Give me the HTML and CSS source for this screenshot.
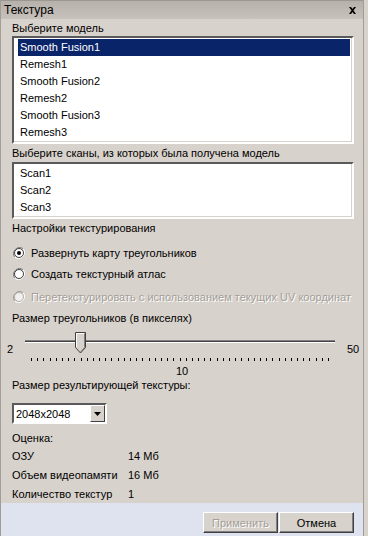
FILE: index.html
```
<!DOCTYPE html>
<html lang="ru">
<head>
    <meta charset="UTF-8">
    <title>Текстура</title>
    <link rel="stylesheet" href="styles.css">
</head>
<body>
    <div class="window">
        <div class="titlebar">
            <span>Текстура</span>
            <svg class="close" width="9" height="8" viewBox="0 0 9 8">
                <path d="M1 0h2l1.5 2 1.5-2h2l-2.5 3.5 2.5 3.5h-2l-1.5-2-1.5 2h-2l2.5-3.5z" fill="#000"/>
            </svg>
        </div>

        <div class="content">
            <div class="label first">Выберите модель</div>
            <div class="listbox models">
                <div class="item selected">Smooth Fusion1</div>
                <div class="item">Remesh1</div>
                <div class="item">Smooth Fusion2</div>
                <div class="item">Remesh2</div>
                <div class="item">Smooth Fusion3</div>
                <div class="item">Remesh3</div>
            </div>

            <div class="label">Выберите сканы, из которых была получена модель</div>
            <div class="listbox scans">
                <div class="item">Scan1</div>
                <div class="item">Scan2</div>
                <div class="item">Scan3</div>
            </div>

            <div class="label">Настройки текстурирования</div>
            <div class="radio r1">
                <svg width="12" height="12" viewBox="0 0 12 12">
                    <path d="M10.2 1.8A6 6 0 0 0 1.8 10.2" stroke="#808080" fill="none"/>
                    <path d="M1.8 10.2A6 6 0 0 0 10.2 1.8" stroke="#fff" fill="none"/>
                    <circle cx="6" cy="6" r="4.5" fill="#fff" stroke="#404040" stroke-width="1"/>
                    <circle cx="6" cy="6" r="2" fill="#000"/>
                </svg>
                <span>Развернуть карту треугольников</span>
            </div>
            <div class="radio r2">
                <svg width="12" height="12" viewBox="0 0 12 12">
                    <path d="M10.2 1.8A6 6 0 0 0 1.8 10.2" stroke="#808080" fill="none"/>
                    <path d="M1.8 10.2A6 6 0 0 0 10.2 1.8" stroke="#fff" fill="none"/>
                    <circle cx="6" cy="6" r="4.5" fill="#fff" stroke="#404040" stroke-width="1"/>
                </svg>
                <span>Создать текстурный атлас</span>
            </div>
            <div class="radio r3 disabled">
                <svg width="12" height="12" viewBox="0 0 12 12">
                    <path d="M10.2 1.8A6 6 0 0 0 1.8 10.2" stroke="#a09c96" fill="none"/>
                    <path d="M1.8 10.2A6 6 0 0 0 10.2 1.8" stroke="#fff" fill="none"/>
                    <circle cx="6" cy="6" r="4.5" fill="#f2f0ee" stroke="#b4b0aa" stroke-width="1"/>
                </svg>
                <span>Перетекстурировать с использованием текущих UV координат</span>
            </div>

            <div class="label size">Размер треугольников (в пикселях)</div>
            <div class="slider">
                <span class="min">2</span>
                <div class="slider-body">
                    <div class="track"></div>
                    <svg class="thumb" width="11" height="22" viewBox="0 0 11 22">
                        <path d="M0.5 0.5h10v15l-5 5.5-5-5.5z" fill="#d8d2cc" stroke="#404040"/>
                        <path d="M1.5 15V1.5h8" stroke="#fff" fill="none"/>
                        <path d="M9.5 1.5v14l-4 4.5" stroke="#808080" fill="none"/>
                    </svg>
                    <div class="ticks" id="ticks"></div>
                </div>
                <span class="max">50</span>
            </div>
            <div class="slider-value">10</div>

            <div class="label">Размер результирующей текстуры:</div>
            <div class="combo">
                <span class="combo-text">2048x2048</span>
                <span class="combo-btn">
                    <svg width="7" height="4" viewBox="0 0 7 4"><path d="M0 0h7l-3.5 4z" fill="#000"/></svg>
                </span>
            </div>

            <div class="stats">
                <div class="stat-title">Оценка:</div>
                <div class="stat"><span>ОЗУ</span><span>14 Мб</span></div>
                <div class="stat"><span>Объем видеопамяти</span><span>16 Мб</span></div>
                <div class="stat"><span>Количество текстур</span><span>1</span></div>
            </div>
        </div>

        <div class="footer">
            <button class="btn" disabled>Применить</button>
            <button class="btn">Отмена</button>
        </div>
    </div>

    <script>
        // tick marks for values 2..50
        const ticks = document.getElementById('ticks');
        for (let i = 2; i <= 50; i++) {
            const t = document.createElement('span');
            ticks.appendChild(t);
        }
    </script>
</body>
</html>
```

FILE: styles.css
```
body {
    margin: 0;
    background-color: #d8d2cc;
    font-family: "Liberation Sans", Arial, sans-serif;
    font-size: 11px;
    color: #000;
}
.window {
    width: 364px;
    height: 536px;
    box-sizing: border-box;
    border-left: 1px solid #a29d96;
    border-right: 1px solid #a29d96;
    border-top: 1px solid #9c978f;
    display: flex;
    flex-direction: column;
    background-color: #d8d2cc;
}
.titlebar {
    height: 18px;
    flex-shrink: 0;
    display: flex;
    align-items: center;
    justify-content: space-between;
    padding: 0 6px 0 3px;
    background: linear-gradient(#b6b1aa, #c6c1ba);
    font-size: 12px;
}
.close {
    margin-top: 1px;
}
.content {
    flex: 1;
    display: flex;
    flex-direction: column;
}
.label {
    height: 18px;
    display: flex;
    align-items: center;
    padding-left: 11px;
}
.label.first {
    height: 17px;
}
.listbox {
    margin-left: 11px;
    width: 342px;
    box-sizing: border-box;
    background-color: #fff;
    border: 2px solid;
    border-color: #5a5a5a #ffffff #ffffff #5a5a5a;
    box-shadow: inset -1px -1px 0 #d8d2cc;
    padding: 1px 2px 1px 4px;
}
.models {
    height: 108px;
}
.scans {
    height: 57px;
}
.item {
    height: 17px;
    line-height: 17px;
    padding-left: 2px;
}
.item.selected {
    background-color: #0a246a;
    color: #fff;
}
.radio {
    display: flex;
    align-items: center;
    gap: 6px;
    padding-left: 12px;
    height: 21px;
}
.radio.r1 {
    margin-top: 5px;
}
.radio.r3 {
    margin-top: 2px;
    height: 22px;
}
.radio.disabled span {
    color: #a39e97;
    text-shadow: 1px 1px 0 #fff;
}
.label.size {
    height: 19px;
}
.slider {
    height: 40px;
    display: flex;
    align-items: center;
    position: relative;
}
.slider .min {
    width: 18px;
    padding-left: 6px;
    box-sizing: border-box;
    margin-top: 4px;
}
.slider .max {
    margin-left: 6px;
    margin-top: 4px;
}
.slider-body {
    position: relative;
    width: 322px;
    height: 40px;
}
.track {
    position: absolute;
    left: 6px;
    right: 6px;
    top: 13px;
    border-top: 1px solid #808080;
    border-bottom: 1px solid #fff;
    background-color: #404040;
    height: 1px;
}
.thumb {
    position: absolute;
    left: 56px;
    top: 5px;
}
.ticks {
    position: absolute;
    left: 12px;
    right: 12px;
    top: 31px;
    display: flex;
    justify-content: space-between;
}
.ticks span {
    width: 1px;
    height: 3px;
    background-color: #000;
}
.slider-value {
    height: 9px;
    line-height: 9px;
    padding-left: 175px;
}
.combo {
    margin: 9px 0 0 11px;
    width: 95px;
    height: 21px;
    box-sizing: border-box;
    border: 2px solid;
    border-color: #5a5a5a #ffffff #ffffff #5a5a5a;
    background-color: #fff;
    display: flex;
    align-items: center;
    justify-content: space-between;
    padding-left: 2px;
}
.combo-btn {
    width: 15px;
    height: 17px;
    box-sizing: border-box;
    background-color: #d8d2cc;
    border: 1px solid;
    border-color: #fff #404040 #404040 #fff;
    display: flex;
    align-items: center;
    justify-content: center;
}
.stats {
    margin-top: 6px;
    padding-left: 11px;
}
.stat-title {
    height: 16px;
    line-height: 16px;
}
.stat {
    height: 19px;
    display: flex;
    align-items: center;
}
.stat span:first-child {
    width: 116px;
}
.footer {
    height: 37px;
    flex-shrink: 0;
    background-color: #dfe2ef;
    display: flex;
    justify-content: flex-end;
    align-items: flex-start;
    gap: 1px;
    padding: 9px 9px 0 0;
}
.btn {
    width: 75px;
    height: 21px;
    font-family: inherit;
    font-size: 11px;
    background-color: #d8d2cc;
    border: 1px solid;
    border-color: #fff #404040 #404040 #fff;
    box-shadow: inset -1px -1px 0 #808080;
    padding: 0;
    color: #000;
}
.btn:disabled {
    color: #a39e97;
    text-shadow: 1px 1px 0 #fff;
}
```
